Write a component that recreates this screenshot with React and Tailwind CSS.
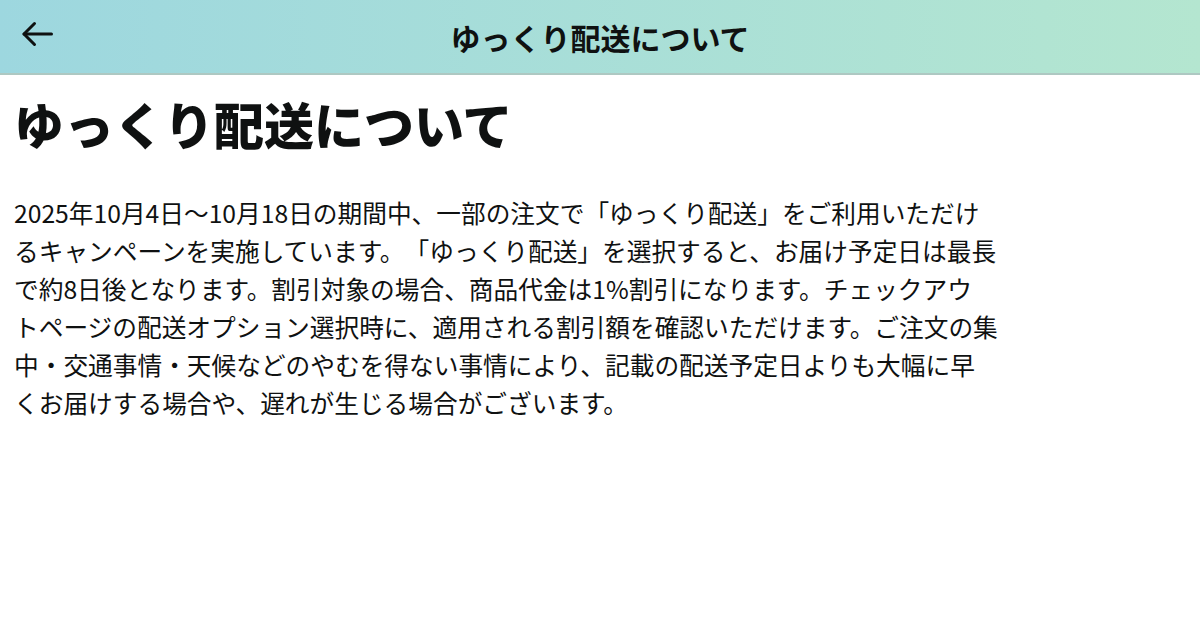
import React from "react";

const lines = [
  "2025年10月4日～10月18日の期間中、一部の注文で「ゆっくり配送」をご利用いただけ",
  "るキャンペーンを実施しています。「ゆっくり配送」を選択すると、お届け予定日は最長",
  "で約8日後となります。割引対象の場合、商品代金は1%割引になります。チェックアウ",
  "トページの配送オプション選択時に、適用される割引額を確認いただけます。ご注文の集",
  "中・交通事情・天候などのやむを得ない事情により、記載の配送予定日よりも大幅に早",
  "くお届けする場合や、遅れが生じる場合がございます。",
];

const BackArrow = () => (
  <svg width="32" height="26" viewBox="0 0 32 26" fill="none" stroke="currentColor" strokeWidth="3" strokeLinecap="round" strokeLinejoin="round">
    <path d="M3 13H30.5" />
    <path d="M13.5 2.5L3 13L13.5 23.5" />
  </svg>
);

const App = () => {
  return (
    <div
      className="min-h-screen w-full bg-white text-[#0f1111] [text-spacing-trim:space-all]"
      style={{ fontFamily: '"Noto Sans CJK JP", "Noto Sans", sans-serif' }}
    >
      {/* Header */}
      <header className="relative flex h-[75px] items-center justify-center border-b-2 border-[#aec8c2] bg-gradient-to-r from-[#9dd7df] to-[#b4e6d0]">
        <button className="absolute left-[21px] top-[21px] p-0 text-[#0f1111]" aria-label="戻る">
          <BackArrow />
        </button>
        <h1 className="text-[30px] font-bold leading-none">ゆっくり配送について</h1>
      </header>

      {/* Content */}
      <main className="px-[14px]">
        <h2 className="mt-[18px] text-[50px] font-black leading-[1.2]">ゆっくり配送について</h2>
        <p className="mt-[40px] whitespace-nowrap text-[24.7px] leading-[38px]">
          {lines.map((line, i) => (
            <React.Fragment key={i}>
              {line}
              {i < lines.length - 1 && <br />}
            </React.Fragment>
          ))}
        </p>
      </main>
    </div>
  );
};

export default App;
